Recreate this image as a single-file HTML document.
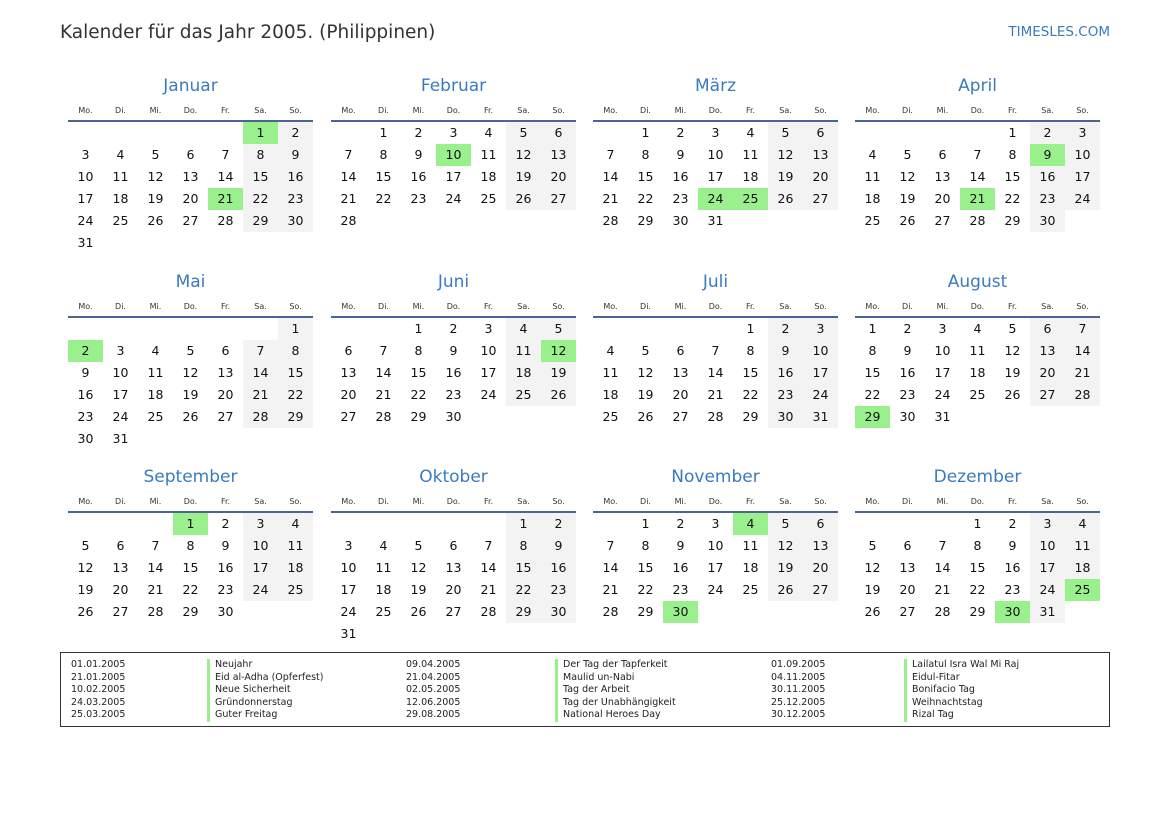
<!DOCTYPE html>
<html><head><meta charset="utf-8"><style>
body{margin:0;width:1169px;height:827px;background:#fff;font-family:"DejaVu Sans","Liberation Sans",sans-serif;position:relative;overflow:hidden;color:#111}
.t{position:absolute;left:60px;top:20px;font-size:18.5px;color:#333;line-height:26px}
.s{position:absolute;right:59px;top:23px;font-size:13.5px;color:#3a7abf;line-height:18px}
.m{position:absolute;width:245px}
.m h2{margin:0;height:30px;line-height:30px;font-weight:normal;font-size:17px;color:#3a7abf;text-align:center}
table{border-collapse:collapse;table-layout:fixed;width:245px}
th{height:19px;font-size:8px;font-weight:normal;color:#333;border-bottom:2px solid #4a6592;padding:0;line-height:19px}
td{width:35px;height:22px;padding:0;text-align:center;font-size:12.5px;line-height:22px}
td.w{background:#f3f3f3}td.h{background:#9af08c}
.lg{position:absolute;left:60px;top:652px;width:1048px;height:73px;border:1px solid #333;font-size:9.5px;color:#222}
.lg div{position:absolute;line-height:12.5px}
.b{border-left:3px solid #9af08c;padding-left:5px}
</style></head><body>
<div class="t">Kalender für das Jahr 2005. (Philippinen)</div>
<div class="s">TIMESLES.COM</div>

<div class="m" style="left:68px;top:71px"><h2>Januar</h2><table><tr><th>Mo.</th><th>Di.</th><th>Mi.</th><th>Do.</th><th>Fr.</th><th>Sa.</th><th>So.</th></tr>
<tr><td></td><td></td><td></td><td></td><td></td><td class="h">1</td><td class="w">2</td></tr>
<tr><td>3</td><td>4</td><td>5</td><td>6</td><td>7</td><td class="w">8</td><td class="w">9</td></tr>
<tr><td>10</td><td>11</td><td>12</td><td>13</td><td>14</td><td class="w">15</td><td class="w">16</td></tr>
<tr><td>17</td><td>18</td><td>19</td><td>20</td><td class="h">21</td><td class="w">22</td><td class="w">23</td></tr>
<tr><td>24</td><td>25</td><td>26</td><td>27</td><td>28</td><td class="w">29</td><td class="w">30</td></tr>
<tr><td>31</td><td></td><td></td><td></td><td></td><td></td><td></td></tr></table></div>

<div class="m" style="left:331px;top:71px"><h2>Februar</h2><table><tr><th>Mo.</th><th>Di.</th><th>Mi.</th><th>Do.</th><th>Fr.</th><th>Sa.</th><th>So.</th></tr>
<tr><td></td><td>1</td><td>2</td><td>3</td><td>4</td><td class="w">5</td><td class="w">6</td></tr>
<tr><td>7</td><td>8</td><td>9</td><td class="h">10</td><td>11</td><td class="w">12</td><td class="w">13</td></tr>
<tr><td>14</td><td>15</td><td>16</td><td>17</td><td>18</td><td class="w">19</td><td class="w">20</td></tr>
<tr><td>21</td><td>22</td><td>23</td><td>24</td><td>25</td><td class="w">26</td><td class="w">27</td></tr>
<tr><td>28</td><td></td><td></td><td></td><td></td><td></td><td></td></tr></table></div>

<div class="m" style="left:593px;top:71px"><h2>März</h2><table><tr><th>Mo.</th><th>Di.</th><th>Mi.</th><th>Do.</th><th>Fr.</th><th>Sa.</th><th>So.</th></tr>
<tr><td></td><td>1</td><td>2</td><td>3</td><td>4</td><td class="w">5</td><td class="w">6</td></tr>
<tr><td>7</td><td>8</td><td>9</td><td>10</td><td>11</td><td class="w">12</td><td class="w">13</td></tr>
<tr><td>14</td><td>15</td><td>16</td><td>17</td><td>18</td><td class="w">19</td><td class="w">20</td></tr>
<tr><td>21</td><td>22</td><td>23</td><td class="h">24</td><td class="h">25</td><td class="w">26</td><td class="w">27</td></tr>
<tr><td>28</td><td>29</td><td>30</td><td>31</td><td></td><td></td><td></td></tr></table></div>

<div class="m" style="left:855px;top:71px"><h2>April</h2><table><tr><th>Mo.</th><th>Di.</th><th>Mi.</th><th>Do.</th><th>Fr.</th><th>Sa.</th><th>So.</th></tr>
<tr><td></td><td></td><td></td><td></td><td>1</td><td class="w">2</td><td class="w">3</td></tr>
<tr><td>4</td><td>5</td><td>6</td><td>7</td><td>8</td><td class="h">9</td><td class="w">10</td></tr>
<tr><td>11</td><td>12</td><td>13</td><td>14</td><td>15</td><td class="w">16</td><td class="w">17</td></tr>
<tr><td>18</td><td>19</td><td>20</td><td class="h">21</td><td>22</td><td class="w">23</td><td class="w">24</td></tr>
<tr><td>25</td><td>26</td><td>27</td><td>28</td><td>29</td><td class="w">30</td><td></td></tr></table></div>

<div class="m" style="left:68px;top:267px"><h2>Mai</h2><table><tr><th>Mo.</th><th>Di.</th><th>Mi.</th><th>Do.</th><th>Fr.</th><th>Sa.</th><th>So.</th></tr>
<tr><td></td><td></td><td></td><td></td><td></td><td></td><td class="w">1</td></tr>
<tr><td class="h">2</td><td>3</td><td>4</td><td>5</td><td>6</td><td class="w">7</td><td class="w">8</td></tr>
<tr><td>9</td><td>10</td><td>11</td><td>12</td><td>13</td><td class="w">14</td><td class="w">15</td></tr>
<tr><td>16</td><td>17</td><td>18</td><td>19</td><td>20</td><td class="w">21</td><td class="w">22</td></tr>
<tr><td>23</td><td>24</td><td>25</td><td>26</td><td>27</td><td class="w">28</td><td class="w">29</td></tr>
<tr><td>30</td><td>31</td><td></td><td></td><td></td><td></td><td></td></tr></table></div>

<div class="m" style="left:331px;top:267px"><h2>Juni</h2><table><tr><th>Mo.</th><th>Di.</th><th>Mi.</th><th>Do.</th><th>Fr.</th><th>Sa.</th><th>So.</th></tr>
<tr><td></td><td></td><td>1</td><td>2</td><td>3</td><td class="w">4</td><td class="w">5</td></tr>
<tr><td>6</td><td>7</td><td>8</td><td>9</td><td>10</td><td class="w">11</td><td class="h">12</td></tr>
<tr><td>13</td><td>14</td><td>15</td><td>16</td><td>17</td><td class="w">18</td><td class="w">19</td></tr>
<tr><td>20</td><td>21</td><td>22</td><td>23</td><td>24</td><td class="w">25</td><td class="w">26</td></tr>
<tr><td>27</td><td>28</td><td>29</td><td>30</td><td></td><td></td><td></td></tr></table></div>

<div class="m" style="left:593px;top:267px"><h2>Juli</h2><table><tr><th>Mo.</th><th>Di.</th><th>Mi.</th><th>Do.</th><th>Fr.</th><th>Sa.</th><th>So.</th></tr>
<tr><td></td><td></td><td></td><td></td><td>1</td><td class="w">2</td><td class="w">3</td></tr>
<tr><td>4</td><td>5</td><td>6</td><td>7</td><td>8</td><td class="w">9</td><td class="w">10</td></tr>
<tr><td>11</td><td>12</td><td>13</td><td>14</td><td>15</td><td class="w">16</td><td class="w">17</td></tr>
<tr><td>18</td><td>19</td><td>20</td><td>21</td><td>22</td><td class="w">23</td><td class="w">24</td></tr>
<tr><td>25</td><td>26</td><td>27</td><td>28</td><td>29</td><td class="w">30</td><td class="w">31</td></tr></table></div>

<div class="m" style="left:855px;top:267px"><h2>August</h2><table><tr><th>Mo.</th><th>Di.</th><th>Mi.</th><th>Do.</th><th>Fr.</th><th>Sa.</th><th>So.</th></tr>
<tr><td>1</td><td>2</td><td>3</td><td>4</td><td>5</td><td class="w">6</td><td class="w">7</td></tr>
<tr><td>8</td><td>9</td><td>10</td><td>11</td><td>12</td><td class="w">13</td><td class="w">14</td></tr>
<tr><td>15</td><td>16</td><td>17</td><td>18</td><td>19</td><td class="w">20</td><td class="w">21</td></tr>
<tr><td>22</td><td>23</td><td>24</td><td>25</td><td>26</td><td class="w">27</td><td class="w">28</td></tr>
<tr><td class="h">29</td><td>30</td><td>31</td><td></td><td></td><td></td><td></td></tr></table></div>

<div class="m" style="left:68px;top:462px"><h2>September</h2><table><tr><th>Mo.</th><th>Di.</th><th>Mi.</th><th>Do.</th><th>Fr.</th><th>Sa.</th><th>So.</th></tr>
<tr><td></td><td></td><td></td><td class="h">1</td><td>2</td><td class="w">3</td><td class="w">4</td></tr>
<tr><td>5</td><td>6</td><td>7</td><td>8</td><td>9</td><td class="w">10</td><td class="w">11</td></tr>
<tr><td>12</td><td>13</td><td>14</td><td>15</td><td>16</td><td class="w">17</td><td class="w">18</td></tr>
<tr><td>19</td><td>20</td><td>21</td><td>22</td><td>23</td><td class="w">24</td><td class="w">25</td></tr>
<tr><td>26</td><td>27</td><td>28</td><td>29</td><td>30</td><td></td><td></td></tr></table></div>

<div class="m" style="left:331px;top:462px"><h2>Oktober</h2><table><tr><th>Mo.</th><th>Di.</th><th>Mi.</th><th>Do.</th><th>Fr.</th><th>Sa.</th><th>So.</th></tr>
<tr><td></td><td></td><td></td><td></td><td></td><td class="w">1</td><td class="w">2</td></tr>
<tr><td>3</td><td>4</td><td>5</td><td>6</td><td>7</td><td class="w">8</td><td class="w">9</td></tr>
<tr><td>10</td><td>11</td><td>12</td><td>13</td><td>14</td><td class="w">15</td><td class="w">16</td></tr>
<tr><td>17</td><td>18</td><td>19</td><td>20</td><td>21</td><td class="w">22</td><td class="w">23</td></tr>
<tr><td>24</td><td>25</td><td>26</td><td>27</td><td>28</td><td class="w">29</td><td class="w">30</td></tr>
<tr><td>31</td><td></td><td></td><td></td><td></td><td></td><td></td></tr></table></div>

<div class="m" style="left:593px;top:462px"><h2>November</h2><table><tr><th>Mo.</th><th>Di.</th><th>Mi.</th><th>Do.</th><th>Fr.</th><th>Sa.</th><th>So.</th></tr>
<tr><td></td><td>1</td><td>2</td><td>3</td><td class="h">4</td><td class="w">5</td><td class="w">6</td></tr>
<tr><td>7</td><td>8</td><td>9</td><td>10</td><td>11</td><td class="w">12</td><td class="w">13</td></tr>
<tr><td>14</td><td>15</td><td>16</td><td>17</td><td>18</td><td class="w">19</td><td class="w">20</td></tr>
<tr><td>21</td><td>22</td><td>23</td><td>24</td><td>25</td><td class="w">26</td><td class="w">27</td></tr>
<tr><td>28</td><td>29</td><td class="h">30</td><td></td><td></td><td></td><td></td></tr></table></div>

<div class="m" style="left:855px;top:462px"><h2>Dezember</h2><table><tr><th>Mo.</th><th>Di.</th><th>Mi.</th><th>Do.</th><th>Fr.</th><th>Sa.</th><th>So.</th></tr>
<tr><td></td><td></td><td></td><td>1</td><td>2</td><td class="w">3</td><td class="w">4</td></tr>
<tr><td>5</td><td>6</td><td>7</td><td>8</td><td>9</td><td class="w">10</td><td class="w">11</td></tr>
<tr><td>12</td><td>13</td><td>14</td><td>15</td><td>16</td><td class="w">17</td><td class="w">18</td></tr>
<tr><td>19</td><td>20</td><td>21</td><td>22</td><td>23</td><td class="w">24</td><td class="h">25</td></tr>
<tr><td>26</td><td>27</td><td>28</td><td>29</td><td class="h">30</td><td class="w">31</td><td></td></tr></table></div>

<div class="lg">
<div style="left:10px;top:6px">01.01.2005<br>21.01.2005<br>10.02.2005<br>24.03.2005<br>25.03.2005</div>
<div class="b" style="left:146px;top:6px">Neujahr<br>Eid al-Adha (Opferfest)<br>Neue Sicherheit<br>Gründonnerstag<br>Guter Freitag</div>
<div style="left:345px;top:6px">09.04.2005<br>21.04.2005<br>02.05.2005<br>12.06.2005<br>29.08.2005</div>
<div class="b" style="left:494px;top:6px">Der Tag der Tapferkeit<br>Maulid un-Nabi<br>Tag der Arbeit<br>Tag der Unabhängigkeit<br>National Heroes Day</div>
<div style="left:710px;top:6px">01.09.2005<br>04.11.2005<br>30.11.2005<br>25.12.2005<br>30.12.2005</div>
<div class="b" style="left:843px;top:6px">Lailatul Isra Wal Mi Raj<br>Eidul-Fitar<br>Bonifacio Tag<br>Weihnachtstag<br>Rizal Tag</div>
</div>
</body></html>
